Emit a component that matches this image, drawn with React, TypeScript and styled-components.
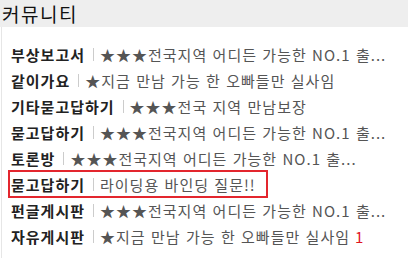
import React from "react";
import styled, { createGlobalStyle } from "styled-components";

const Global = createGlobalStyle`
  html, body { margin: 0; padding: 0; background: #fff; }
  body { font-family: "Noto Sans CJK KR", "Noto Sans", sans-serif; }
`;

const Wrap = styled.div`
  width: 408px;
  height: 258px;
  overflow: hidden;
  display: flex;
  flex-direction: column;
`;

const Header = styled.div`
  height: 27px;
  background: #eeeeee;
  display: flex;
  align-items: center;
  padding-left: 2px;
  font-size: 19px;
  letter-spacing: 1.5px;
  color: #111;
  line-height: 1;
`;

const Body = styled.div`
  flex: 1;
  margin-left: 1px;
  border-left: 1px solid #e6e6e6;
  padding: 14px 0 0 7px;
  display: flex;
  flex-direction: column;
`;

const Row = styled.div<{ $hl?: boolean }>`
  height: 26px;
  display: flex;
  align-items: center;
  width: fit-content;
  padding-right: ${(p) => (p.$hl ? "11px" : "0")};
  outline: ${(p) => (p.$hl ? "2px solid #e3262e" : "none")};
  outline-offset: -1px;
  white-space: nowrap;
  font-size: 15px;
  letter-spacing: 1px;
  line-height: 1;
`;

const Label = styled.span`
  font-weight: 700;
  color: #222;
  padding-left: 2px;
`;

const Sep = styled.span`
  display: inline-block;
  width: 1px;
  height: 13px;
  background: #cccccc;
  margin: 0 6px 0 8px;
`;

const Text = styled.span`
  color: #555;
  word-spacing: 1px;
`;

const Count = styled.span`
  color: #e0141e;
  margin-left: 5px;
`;

const items: { label: string; text: string; hl?: boolean; count?: number }[] = [
  { label: "부상보고서", text: "★★★전국지역 어디든 가능한 NO.1 출..." },
  { label: "같이가요", text: "★지금 만남 가능 한 오빠들만 실사임" },
  { label: "기타묻고답하기", text: "★★★전국 지역 만남보장" },
  { label: "묻고답하기", text: "★★★전국지역 어디든 가능한 NO.1 출..." },
  { label: "토론방", text: "★★★전국지역 어디든 가능한 NO.1 출..." },
  { label: "묻고답하기", text: "라이딩용 바인딩 질문!!", hl: true },
  { label: "펀글게시판", text: "★★★전국지역 어디든 가능한 NO.1 출..." },
  { label: "자유게시판", text: "★지금 만남 가능 한 오빠들만 실사임", count: 1 },
];

export default function App() {
  return (
    <Wrap>
      <Global />
      <Header>커뮤니티</Header>
      <Body>
        {items.map((it, i) => (
          <Row key={i} $hl={it.hl}>
            <Label>{it.label}</Label>
            <Sep />
            <Text>{it.text}</Text>
            {it.count !== undefined && <Count>{it.count}</Count>}
          </Row>
        ))}
      </Body>
    </Wrap>
  );
}
